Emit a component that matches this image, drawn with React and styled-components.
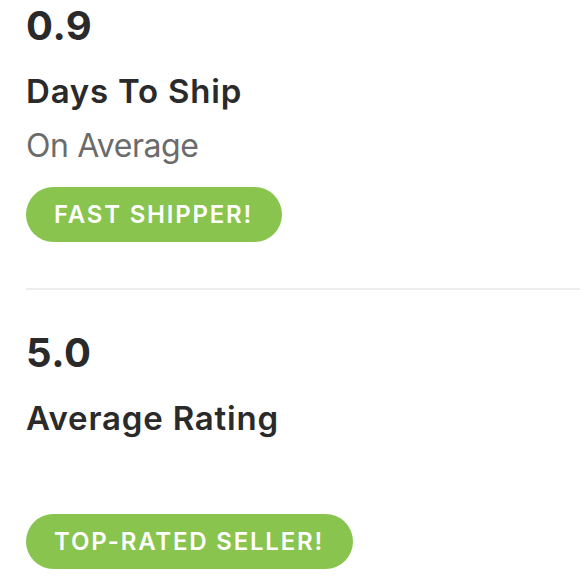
import styled, { createGlobalStyle } from "styled-components"

const GlobalStyle = createGlobalStyle`
    html, body {
        margin: 0;
        padding: 0;
        background: #ffffff;
    }
    body {
        font-family: "Inter", "Liberation Sans", sans-serif;
        color: #2a2a2a;
    }
`

// Styled-Components
const Page = styled.div`
    width: 580px;
    height: 580px;
    overflow: hidden;
    display: flex;
    flex-direction: column;
    padding-top: 1.5px;
    box-sizing: border-box;
`
const Section = styled.section`
    display: flex;
    flex-direction: column;
    align-items: flex-start;
    padding: ${props => props.pad || "0 0 0 26px"};
`
const Value = styled.div`
    font-size: 40px;
    font-weight: 700;
    line-height: 48px;
    letter-spacing: 0.6px;
`
const Label = styled.div`
    margin-top: 21.5px;
    font-size: 33px;
    font-weight: 600;
    line-height: 40px;
    letter-spacing: 0.8px;
`
const Sub = styled.div`
    margin-top: 15px;
    min-height: 40px;
    font-size: 32px;
    font-weight: 400;
    line-height: 40px;
    letter-spacing: -0.4px;
    color: #6b6b6b;
`
const Badge = styled.div`
    margin-top: 21px;
    height: 55px;
    padding: 0 29px 0 28px;
    display: flex;
    align-items: center;
    border-radius: 28px;
    background: #88c44e;
    color: #ffffff;
    font-size: 24px;
    font-weight: 600;
    letter-spacing: 1.8px;
`
const Divider = styled.hr`
    margin: 46px 0 0 26px;
    border: none;
    height: 2px;
    background: #eeeeee;
`

const Stat = ({ value, label, sub, badge, pad }) => (
    <Section pad={pad}>
        <Value>{value}</Value>
        <Label>{label}</Label>
        <Sub>{sub}</Sub>
        <Badge>{badge}</Badge>
    </Section>
)

const App = () => {
    return (
        <Page>
            <GlobalStyle />
            <Stat value="0.9" label="Days To Ship" sub="On Average" badge="FAST SHIPPER!" pad="0 0 0 26px" />
            <Divider />
            <Stat value="5.0" label="Average Rating" sub="" badge="TOP-RATED SELLER!" pad="38.5px 0 0 26px" />
        </Page>
    )
}

export default App
